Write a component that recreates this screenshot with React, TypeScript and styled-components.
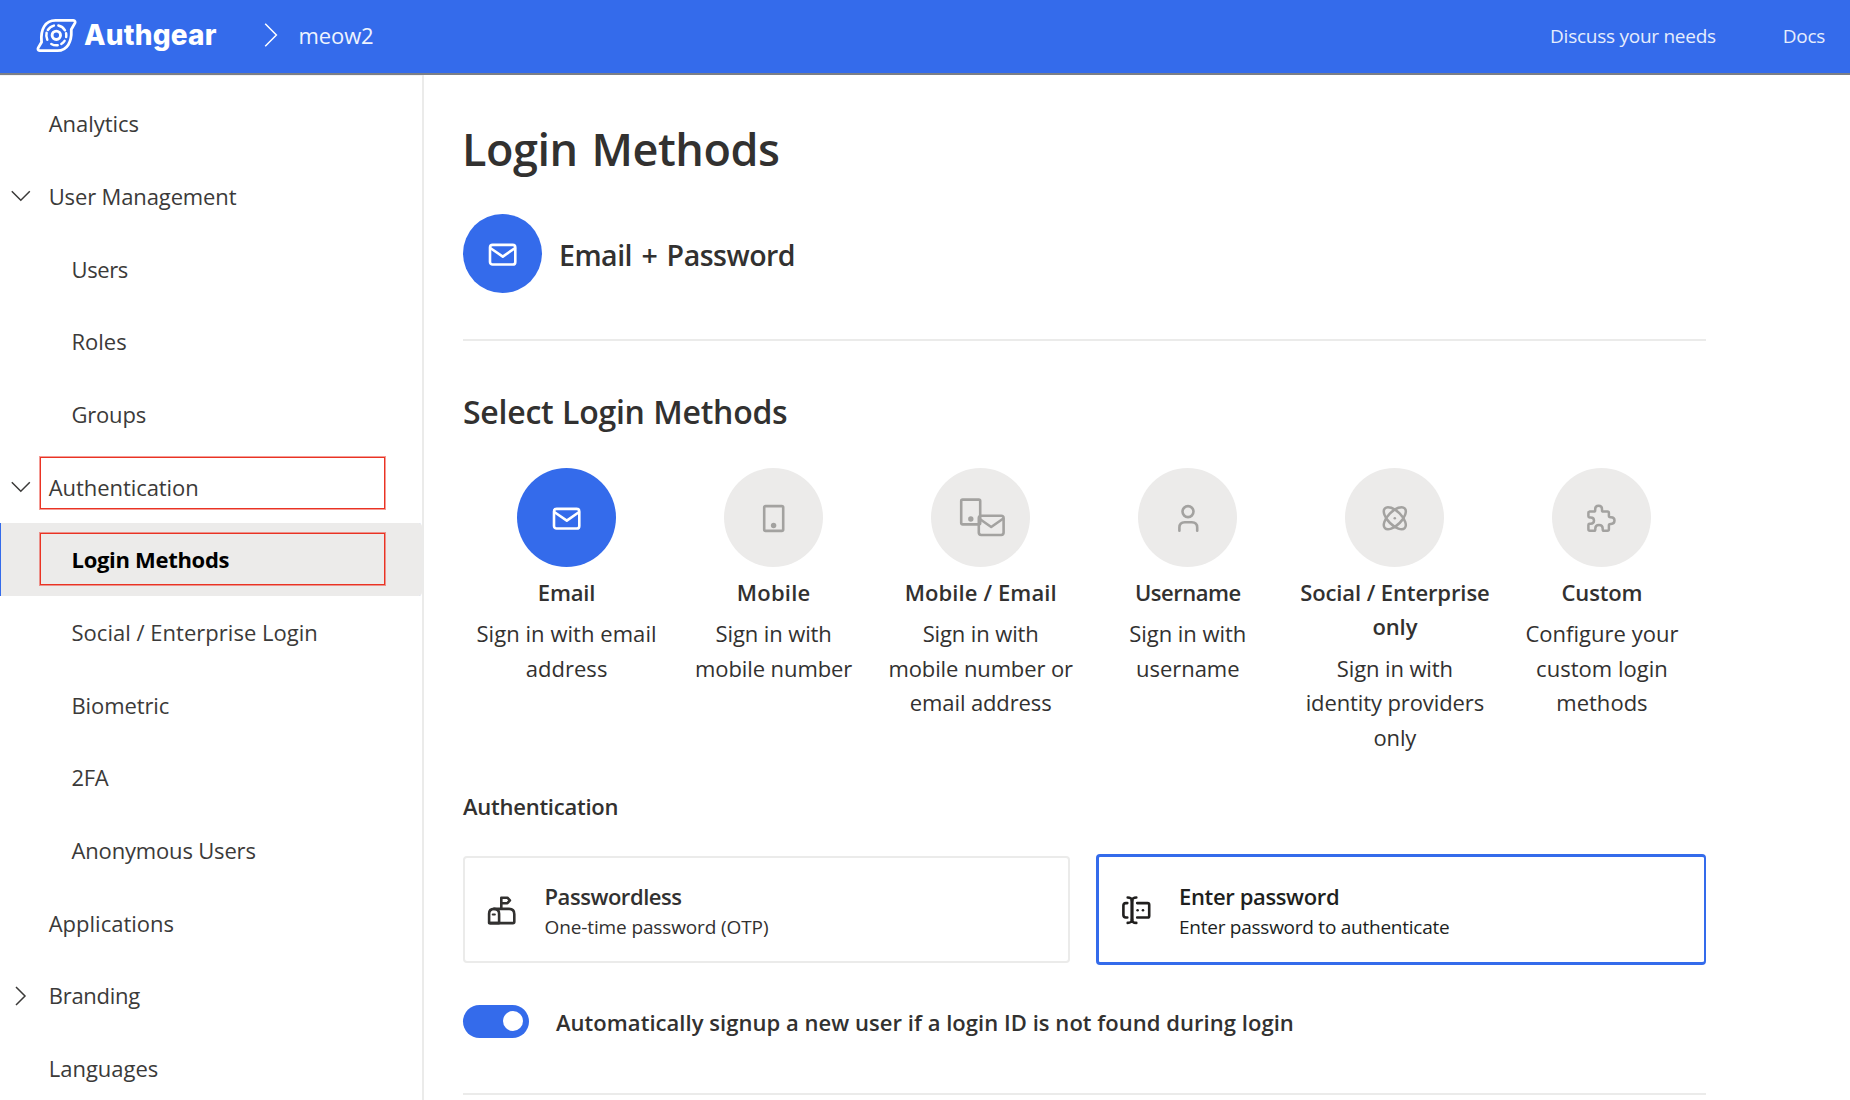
import React from "react";
import styled, { createGlobalStyle } from "styled-components";

const BLUE = "#346beb";
const INK = "#323130";
const LINE = "#ebebea";
const MUTED = "#a3a2a0";

const GlobalStyle = createGlobalStyle`
  *, *::before, *::after { box-sizing: border-box; }
  html, body { margin: 0; padding: 0; background: #fff; }
  body {
    overflow: hidden;
    color: ${INK};
    font-family: "Open Sans", "Noto Sans", sans-serif;
    font-size: 22px;
  }
  svg { display: block; flex: none; }
  h1, h2, h3, p { margin: 0; }
`;

const Page = styled.div`
  display: flex;
  flex-direction: column;
  height: 1100px;
  overflow: hidden;
`;

/* ---------- top bar ---------- */

const TopBar = styled.header`
  display: flex;
  align-items: center;
  flex: none;
  height: 75px;
  padding: 0 25px 3px 36px;
  background: ${BLUE};
  border-bottom: 2px solid #7c7f86;
  color: #fff;
`;

const Brand = styled.div`
  display: flex;
  align-items: center;
  gap: 7px;
  width: 228px;
`;

const BrandName = styled.span`
  font-family: Inter, sans-serif;
  font-size: 28px;
  font-weight: 800;
  line-height: 36px;
  letter-spacing: 0.2px;
`;

const ProjectName = styled.span`
  flex: 1;
  margin-left: 20.5px;
  color: #eef3fe;
  letter-spacing: -0.1px;
`;

const TopLinks = styled.nav`
  display: flex;
  gap: 67px;
  padding-top: 1px;
  font-size: 19px;
`;

const TopLink = styled.a<{ $track: number }>`
  color: #e6edfd;
  letter-spacing: ${(p) => p.$track}px;
`;

/* ---------- sidebar ---------- */

const Body = styled.div`
  display: flex;
  flex: 1;
  min-height: 0;
`;

const Sidebar = styled.nav`
  flex: none;
  width: 424px;
  padding-top: 12px;
  border-right: 2px solid ${LINE};
  box-shadow: inset 0 1px 0 #f3f3f3;
`;

const NavRow = styled.div<{ $selected?: boolean; $track: number }>`
  position: relative;
  display: flex;
  align-items: center;
  height: 72.67px;
  border-radius: 0 4px 4px 0;
  background: ${(p) => (p.$selected ? "#ecebea" : "transparent")};
  box-shadow: ${(p) => (p.$selected ? `inset 1px 0 0 ${BLUE}` : "none")};
  color: ${(p) => (p.$selected ? "#000" : "#3b3a39")};
  font-weight: ${(p) => (p.$selected ? 700 : 400)};
  letter-spacing: ${(p) => p.$track}px;
`;

const NavGutter = styled.span<{ $nested?: boolean }>`
  flex: none;
  width: ${(p) => (p.$nested ? 71.5 : 48.7)}px;
  padding: 1px 0 0 10.5px;
`;

const Highlight = styled.span<{ $top: number }>`
  position: absolute;
  left: 40px;
  top: ${(p) => p.$top}px;
  width: 345px;
  height: 52px;
  border: 1px solid #ea3323;
  box-shadow: 0 0 0 1px rgba(234, 58, 45, 0.5);
`;

/* ---------- content ---------- */

const Content = styled.main`
  display: flex;
  flex-direction: column;
  width: 1281.5px;
  padding: 43.5px 0 0 39px;
`;

const PageTitle = styled.h1`
  font-size: 45px;
  font-weight: 600;
  line-height: 60px;
  letter-spacing: -0.45px;
  word-spacing: 2.5px;
  margin-left: -1px;
`;

const Summary = styled.div`
  display: flex;
  align-items: center;
  gap: 17px;
  margin-top: 35.5px;
`;

const SummaryText = styled.p`
  padding-top: 3px;
  font-size: 28.5px;
  font-weight: 600;
  line-height: 38px;
  letter-spacing: -0.5px;
  word-spacing: 2.5px;
`;

const Disc = styled.span<{ $size: number; $active?: boolean }>`
  display: flex;
  align-items: center;
  justify-content: center;
  flex: none;
  width: ${(p) => p.$size}px;
  height: ${(p) => p.$size}px;
  border-radius: 50%;
  background: ${(p) => (p.$active ? BLUE : "#ecebea")};
  color: ${(p) => (p.$active ? "#fff" : MUTED)};
`;

const Divider = styled.hr<{ $gap: number }>`
  flex: none;
  width: 100%;
  height: 2px;
  margin: ${(p) => p.$gap}px 0 0;
  border: 0;
  background: ${LINE};
`;

const SectionTitle = styled.h2`
  margin-top: 49px;
  font-size: 32px;
  font-weight: 600;
  line-height: 44px;
  letter-spacing: -0.25px;
  word-spacing: 0.5px;
`;

const MethodGrid = styled.div`
  display: grid;
  grid-template-columns: repeat(6, 1fr);
  margin-top: 34px;
`;

const Method = styled.div`
  display: flex;
  flex-direction: column;
  align-items: center;
  padding: 0 6px;
  line-height: 34.6px;
  text-align: center;
`;

const MethodName = styled.h3<{ $track: number }>`
  margin-top: 7.5px;
  font-size: 22px;
  font-weight: 600;
  letter-spacing: ${(p) => p.$track}px;
`;

const MethodText = styled.p<{ $track: number }>`
  margin-top: 7px;
  padding: 0 4px;
  letter-spacing: ${(p) => p.$track}px;
`;

const GroupTitle = styled.h3`
  margin-top: 36.5px;
  font-size: 22px;
  font-weight: 600;
  line-height: 30px;
  letter-spacing: -0.24px;
`;

const Choices = styled.div`
  display: grid;
  grid-template-columns: 607px 609.5px;
  align-items: center;
  justify-content: space-between;
  height: 111px;
  margin-top: 33px;
`;

const Choice = styled.div<{ $active?: boolean }>`
  display: flex;
  align-items: center;
  height: ${(p) => (p.$active ? 111 : 107)}px;
  padding-left: ${(p) => (p.$active ? 20.5 : 20)}px;
  gap: 26.5px;
  border-style: solid;
  border-color: ${(p) => (p.$active ? BLUE : LINE)};
  border-width: ${(p) => (p.$active ? "3px 2px 3px 3px" : "2px")};
  border-radius: 4px;
  color: ${(p) => (p.$active ? "#201f1e" : INK)};
`;

const ChoiceLabel = styled.div`
  padding-top: 4px;
`;

const ChoiceTitle = styled.div<{ $track: number }>`
  font-weight: 600;
  line-height: 30px;
  letter-spacing: ${(p) => p.$track}px;
`;

const ChoiceText = styled.div<{ $track: number }>`
  padding-top: 2px;
  font-size: 19px;
  line-height: 28px;
  letter-spacing: ${(p) => p.$track}px;
`;

const ToggleRow = styled.div`
  display: flex;
  align-items: center;
  gap: 27px;
  margin-top: 40px;
`;

const ToggleLabel = styled.span`
  padding-top: 2px;
  font-weight: 600;
  line-height: 31px;
  letter-spacing: 0.04px;
`;

const Toggle = styled.span`
  display: flex;
  align-items: center;
  justify-content: flex-end;
  width: 66px;
  height: 33px;
  padding-right: 6.5px;
  border-radius: 17px;
  background: ${BLUE};
`;

const Knob = styled.span`
  width: 20px;
  height: 20px;
  border-radius: 50%;
  background: #fff;
`;

/* ---------- drawings ---------- */

type GlyphProps = { size?: number; stroke?: number; children: React.ReactNode };

const Glyph = ({ size = 33, stroke = 2.6, children }: GlyphProps) => (
  <svg
    width={size}
    height={size}
    viewBox={`0 0 ${size} ${size}`}
    fill="none"
    stroke="currentColor"
    strokeWidth={stroke}
    strokeLinecap="round"
    strokeLinejoin="round"
  >
    {children}
  </svg>
);

const arc = (from: number, to: number, r = 10) => {
  const at = (deg: number) => {
    const a = (deg * Math.PI) / 180;
    return `${(20.3 + r * Math.cos(a)).toFixed(2)} ${(18.3 + r * Math.sin(a)).toFixed(2)}`;
  };
  return `M${at(from)} A${r} ${r} 0 0 1 ${at(to)}`;
};

const Logo = () => (
  <svg width="41" height="37" viewBox="0 0 41 37" fill="none" stroke="#fff" strokeWidth="2.8">
    <path
      strokeLinejoin="round"
      d="M19.5 3.4H37.4C39 3.4 39.5 4.9 38.9 6.1L35.4 12.2C35.2 12.6 35.2 13 35.3 13.6C35.8 24.5 31.5 33.6 21.5 33.6H3.6C2 33.6 1.6 32 2.2 30.9L5.5 25.3C5.7 24.9 5.6 24.5 5.5 24C4.6 12.5 9 3.4 19.5 3.4Z"
    />
    <circle cx="20.3" cy="18.3" r="4.2" strokeWidth="2.9" />
    {[[-148, -104], [-78, -30], [-12, 10], [34, 60], [82, 120], [154, 194]].map(([a, b]) => (
      <path key={a} d={arc(a, b)} strokeWidth="2.5" strokeLinecap="round" />
    ))}
  </svg>
);

const CrumbChevron = () => (
  <svg width="14" height="24" viewBox="0 0 14 24" fill="none" stroke="#fff" strokeWidth="1.5">
    <path d="M1.2 0.8L12.4 12L1.2 23.2" />
  </svg>
);

const ChevronDown = () => (
  <Glyph size={20} stroke={1.5}>
    <path d="M0.8 5.3L9.8 14.3L18.8 5.3" strokeLinecap="butt" strokeLinejoin="miter" />
  </Glyph>
);

const ChevronRight = () => (
  <Glyph size={20} stroke={1.5}>
    <path d="M5 1L14 10L5 19" strokeLinecap="butt" strokeLinejoin="miter" />
  </Glyph>
);

const MailIcon = () => (
  <Glyph>
    <rect x="4" y="7.9" width="25.3" height="19.6" rx="2.6" />
    <path d="M4.6 11.2L16.8 19.6L28.8 11.2" />
  </Glyph>
);

const MobileIcon = () => (
  <Glyph>
    <rect x="7.2" y="5.1" width="19" height="24.8" rx="1.4" />
    <circle cx="16.6" cy="24.5" r="2.7" fill="currentColor" stroke="none" />
  </Glyph>
);

const MobileMailIcon = () => (
  <Glyph size={50}>
    <rect x="5.2" y="6.6" width="19" height="24.8" rx="1.4" />
    <circle cx="14.8" cy="26" r="2.7" fill="currentColor" stroke="none" />
    <rect x="22.8" y="22.7" width="24.8" height="19.3" rx="2.4" />
    <path d="M23.4 25.8L35.2 34L47 25.8" />
  </Glyph>
);

const UserIcon = () => (
  <Glyph>
    <circle cx="17" cy="10.6" r="5.5" />
    <path d="M8.4 29.8V26.6C8.4 23.3 10.5 21.3 13.8 21.3H20.8C24.1 21.3 26.2 23.3 26.2 26.6V29.8" />
  </Glyph>
);

const AtomIcon = () => (
  <Glyph stroke={2.5}>
    <ellipse cx="16.8" cy="17.2" rx="14" ry="6.8" transform="rotate(45 16.8 17.2)" />
    <ellipse cx="16.8" cy="17.2" rx="14" ry="6.8" transform="rotate(-45 16.8 17.2)" />
    <circle cx="16.8" cy="17.2" r="1.3" fill="currentColor" stroke="none" />
  </Glyph>
);

const PuzzleIcon = () => (
  <Glyph stroke={2.5}>
    <path d="M4.6 10.6H8.8Q10.2 10.6 10.2 9.2V8C10.2 5.8 11.6 4.7 13.6 4.7C15.6 4.7 17 5.8 17 8V9.2Q17 10.6 18.4 10.6H22.4Q23.9 10.6 23.9 12.1V14.8Q23.9 16.3 25.4 16.3H26C28.3 16.3 29.5 17.7 29.5 19.6C29.5 21.5 28.3 22.9 26 22.9H25.4Q23.9 22.9 23.9 24.4V28.2Q23.9 29.7 22.4 29.7H19Q17.7 29.7 17.7 28.4V27.6C17.7 25.2 16.2 23.9 14 23.9C11.8 23.9 10.3 25.2 10.3 27.6V28.4Q10.3 29.7 9 29.7H4.9Q3.4 29.7 3.4 28.2V24Q3.4 22.8 4.6 22.8H5.6C7.8 22.8 9 21.5 9 19.6C9 17.7 7.8 16.4 5.6 16.4H4.6Q3.4 16.4 3.4 15.2V12.1Q3.4 10.6 4.9 10.6Z" />
  </Glyph>
);

const MailboxIcon = () => (
  <Glyph stroke={2.6}>
    <path d="M4.1 30.1V20.8C4.1 17.6 6.2 15.9 9.1 15.9C12 15.9 14.1 17.6 14.1 20.8V30.1Z" />
    <path d="M9.1 15.9H24.1C27.3 15.9 29.3 18 29.3 21.2V28.7Q29.3 30.1 27.9 30.1H5.2" />
    <path d="M16.3 15.5V4.7H22.4L24.9 7.4L22.4 10.2H16.8" />
    <path d="M7.8 21.5H9.8" strokeWidth="2.2" />
  </Glyph>
);

const PasswordIcon = () => (
  <Glyph stroke={2.6}>
    <path d="M12 7.6V26.8" strokeWidth="3.2" />
    <path d="M7.7 4.5C10 4.5 12 5.6 12 8C12 5.6 14 4.5 16.3 4.5" />
    <path d="M7.7 29.9C10 29.9 12 28.8 12 26.4C12 28.8 14 29.9 16.3 29.9" />
    <path d="M7.3 10.1H5.8Q3.4 10.1 3.4 12.5V22.1Q3.4 24.5 5.8 24.5H7.3" />
    <path d="M17.2 10.1H27.6Q29.2 10.1 29.2 11.7V22.9Q29.2 24.5 27.6 24.5H17.2" />
    <circle cx="17.6" cy="17.3" r="1.3" fill="currentColor" stroke="none" />
    <circle cx="23" cy="17.3" r="1.3" fill="currentColor" stroke="none" />
  </Glyph>
);

/* ---------- data ---------- */

type NavItem = {
  label: string;
  track: number;
  nested?: boolean;
  icon?: React.ReactNode;
  selected?: boolean;
  markTop?: number;
};

const NAV: NavItem[] = [
  { label: "Analytics", track: -0.05 },
  { label: "User Management", track: -0.13, icon: <ChevronDown /> },
  { label: "Users", track: -0.4, nested: true },
  { label: "Roles", track: 0, nested: true },
  { label: "Groups", track: -0.2, nested: true },
  { label: "Authentication", track: -0.06, icon: <ChevronDown />, markTop: 7 },
  { label: "Login Methods", track: -0.3, nested: true, selected: true, markTop: 10 },
  { label: "Social / Enterprise Login", track: 0.02, nested: true },
  { label: "Biometric", track: -0.1, nested: true },
  { label: "2FA", track: -0.4, nested: true },
  { label: "Anonymous Users", track: -0.17, nested: true },
  { label: "Applications", track: 0 },
  { label: "Branding", track: -0.25, icon: <ChevronRight /> },
  { label: "Languages", track: 0 },
];

type MethodItem = {
  name: string;
  nameTrack: number;
  text: string;
  textTrack: number;
  icon: React.ReactNode;
  active?: boolean;
};

const METHODS: MethodItem[] = [
  { name: "Email", nameTrack: -0.17, text: "Sign in with email address", textTrack: 0.05, icon: <MailIcon />, active: true },
  { name: "Mobile", nameTrack: 0.2, text: "Sign in with mobile number", textTrack: -0.1, icon: <MobileIcon /> },
  { name: "Mobile / Email", nameTrack: 0.1, text: "Sign in with mobile number or email address", textTrack: -0.12, icon: <MobileMailIcon /> },
  { name: "Username", nameTrack: -0.5, text: "Sign in with username", textTrack: -0.05, icon: <UserIcon /> },
  { name: "Social / Enterprise only", nameTrack: -0.1, text: "Sign in with identity providers only", textTrack: -0.11, icon: <AtomIcon /> },
  { name: "Custom", nameTrack: -0.15, text: "Configure your custom login methods", textTrack: 0.02, icon: <PuzzleIcon /> },
];

export default function App() {
  return (
    <Page>
      <GlobalStyle />
      <TopBar>
        <Brand>
          <Logo />
          <BrandName>Authgear</BrandName>
        </Brand>
        <CrumbChevron />
        <ProjectName>meow2</ProjectName>
        <TopLinks>
          <TopLink $track={-0.26}>Discuss your needs</TopLink>
          <TopLink $track={-0.3}>Docs</TopLink>
        </TopLinks>
      </TopBar>

      <Body>
        <Sidebar>
          {NAV.map((item) => (
            <NavRow key={item.label} $selected={item.selected} $track={item.track}>
              <NavGutter $nested={item.nested}>{item.icon}</NavGutter>
              {item.label}
              {item.markTop !== undefined && <Highlight $top={item.markTop} />}
            </NavRow>
          ))}
        </Sidebar>

        <Content>
          <PageTitle>Login Methods</PageTitle>
          <Summary>
            <Disc $size={79} $active>
              <MailIcon />
            </Disc>
            <SummaryText>Email + Password</SummaryText>
          </Summary>
          <Divider $gap={46} />

          <SectionTitle>Select Login Methods</SectionTitle>
          <MethodGrid>
            {METHODS.map((m) => (
              <Method key={m.name}>
                <Disc $size={99} $active={m.active}>
                  {m.icon}
                </Disc>
                <MethodName $track={m.nameTrack}>{m.name}</MethodName>
                <MethodText $track={m.textTrack}>{m.text}</MethodText>
              </Method>
            ))}
          </MethodGrid>

          <GroupTitle>Authentication</GroupTitle>
          <Choices>
            <Choice>
              <MailboxIcon />
              <ChoiceLabel>
                <ChoiceTitle $track={-0.45}>Passwordless</ChoiceTitle>
                <ChoiceText $track={-0.12}>One-time password (OTP)</ChoiceText>
              </ChoiceLabel>
            </Choice>
            <Choice $active>
              <PasswordIcon />
              <ChoiceLabel>
                <ChoiceTitle $track={-0.36}>Enter password</ChoiceTitle>
                <ChoiceText $track={-0.25}>Enter password to authenticate</ChoiceText>
              </ChoiceLabel>
            </Choice>
          </Choices>

          <ToggleRow>
            <Toggle>
              <Knob />
            </Toggle>
            <ToggleLabel>
              Automatically signup a new user if a login ID is not found during login
            </ToggleLabel>
          </ToggleRow>
          <Divider $gap={55} />
        </Content>
      </Body>
    </Page>
  );
}
